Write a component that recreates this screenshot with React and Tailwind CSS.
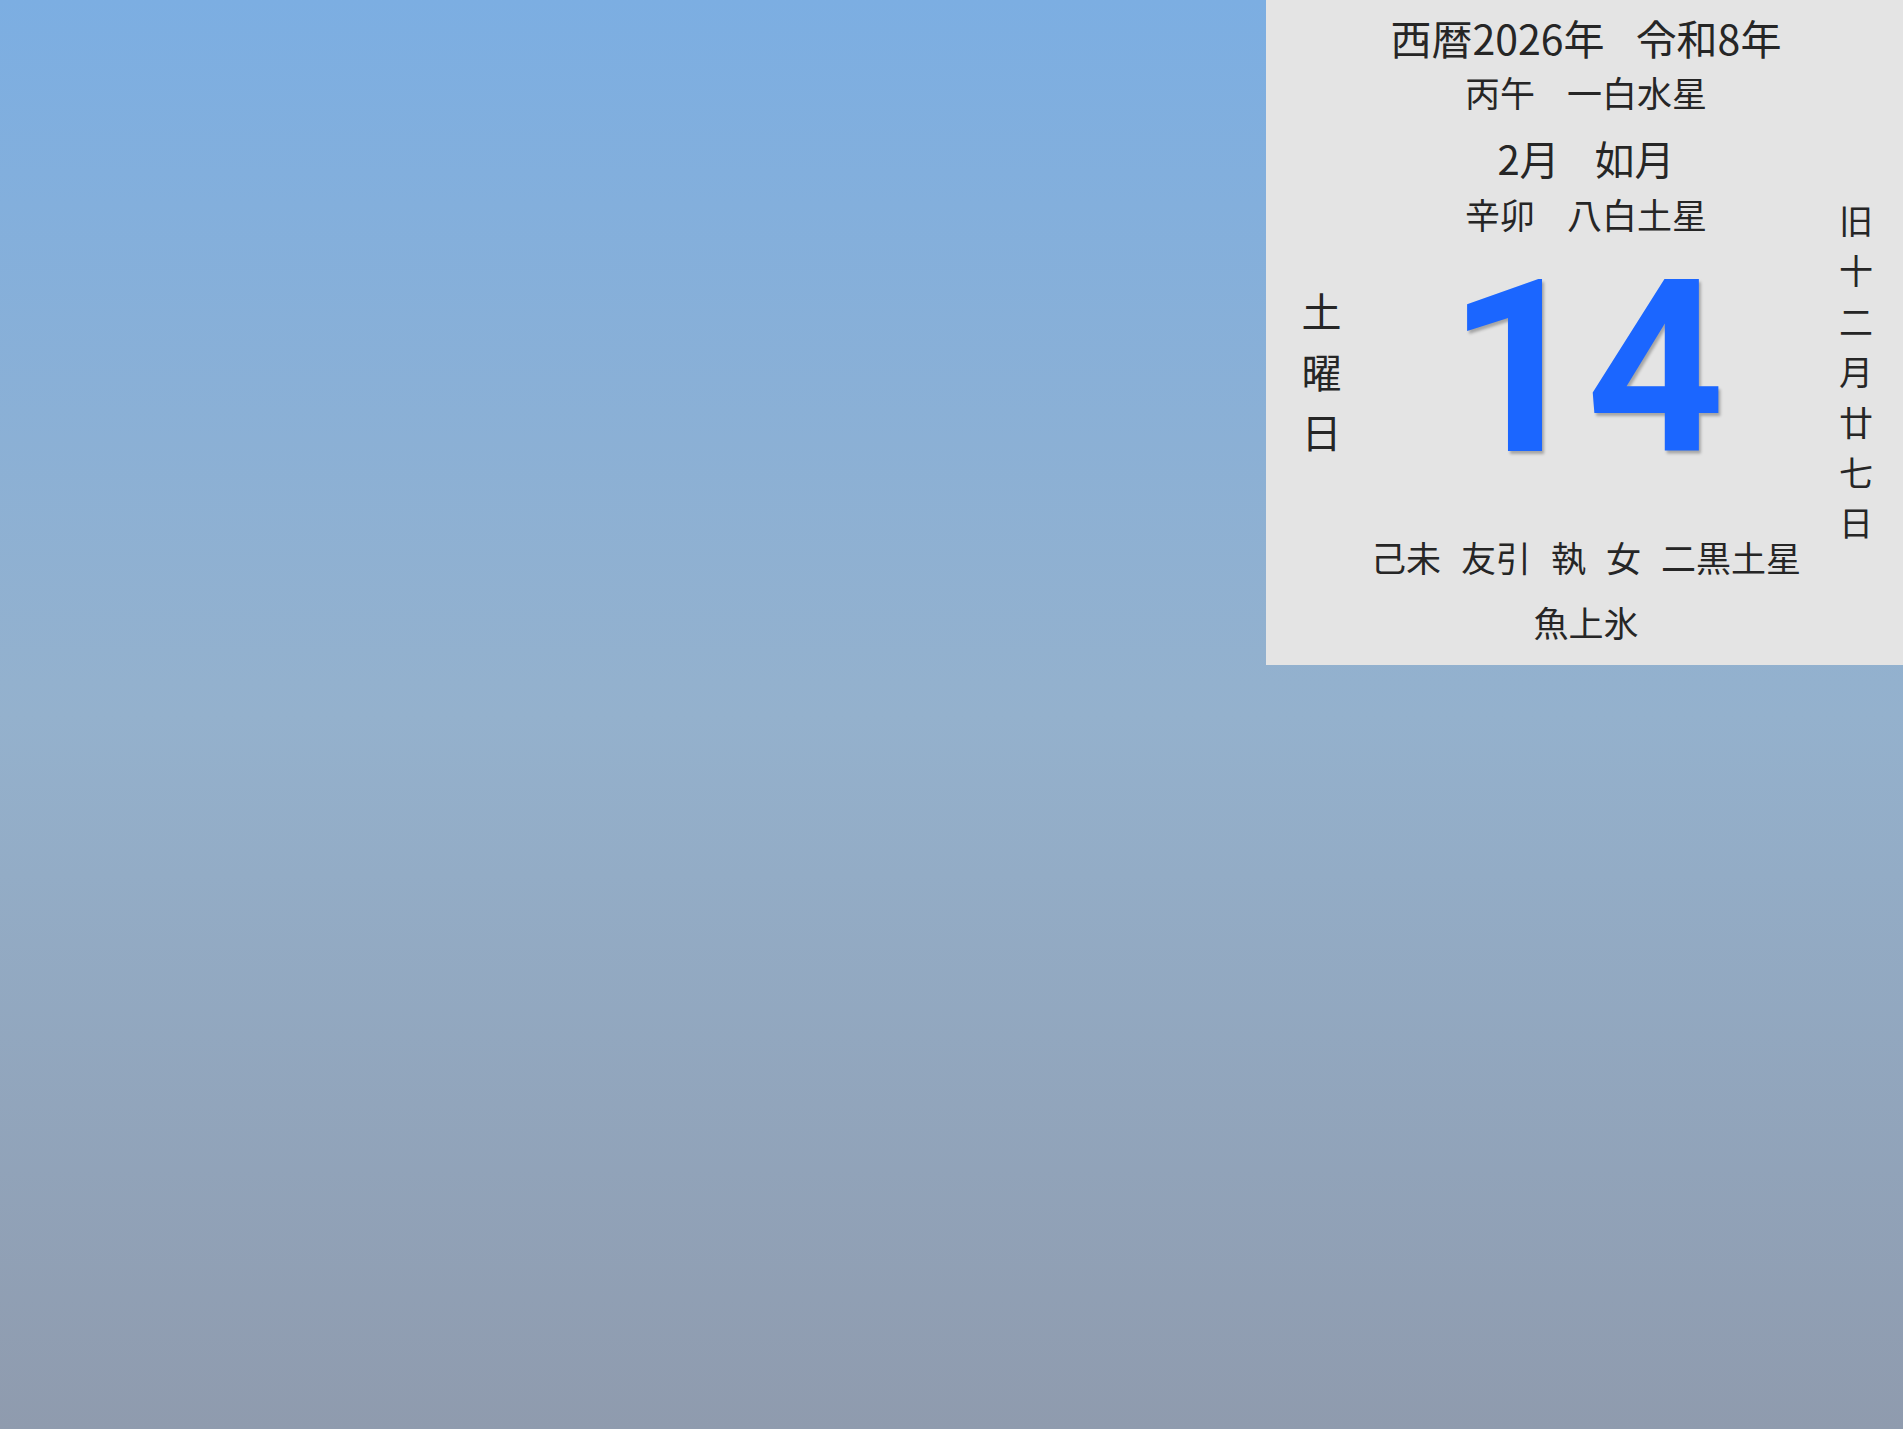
const jp = { fontFamily: '"Noto Sans CJK JP", "Noto Sans", sans-serif' };

function Vertical({ chars, className }) {
  return (
    <div className={className}>
      {chars.split("").map((c, i) => (
        <div key={i}>{c}</div>
      ))}
    </div>
  );
}

export default function App() {
  return (
    <div className="w-[1903px] h-[1429px] flex justify-end items-start bg-linear-to-b from-[#7caee2] via-[#94b1cd] to-[#8f9bae]">
      <div
        className="w-[637px] h-[665px] shrink-0 bg-[#e4e4e4] flex text-[#262626] whitespace-nowrap"
        style={jp}
      >
        {/* 曜日 */}
        <Vertical
          chars="土曜日"
          className="w-[105px] shrink-0 pl-[6px] flex flex-col items-center pt-[280px] text-[40px] leading-[60.7px]"
        />

        {/* main column */}
        <div className="w-[430px] shrink-0 flex flex-col items-center pt-[13px]">
          <div className="flex gap-[31px] text-[41px] leading-[48px]">
            <span>西暦2026年</span>
            <span>令和8年</span>
          </div>
          <div className="mt-[10px] flex gap-[32px] text-[35px] leading-[42px]">
            <span>丙午</span>
            <span>一白水星</span>
          </div>
          <div className="mt-[21px] flex gap-[35px] text-[40px] leading-[48px]">
            <span>2月</span>
            <span>如月</span>
          </div>
          <div className="mt-[11px] flex gap-[32px] text-[35px] leading-[42px]">
            <span>辛卯</span>
            <span>八白土星</span>
          </div>
          <div
            className="mt-[12px] h-[242px] text-[242px] leading-none font-bold text-[#1b66ff] [text-shadow:2px_3px_3px_rgba(0,0,0,0.28)]"
            style={{ fontFamily: 'Roboto, "Liberation Sans", sans-serif' }}
          >
            14
          </div>
          <div className="mt-[47px] flex gap-[20px] text-[35px] leading-[42px]">
            <span>己未</span>
            <span>友引</span>
            <span>執</span>
            <span>女</span>
            <span>二黒土星</span>
          </div>
          <div className="mt-[23px] text-[35px] leading-[42px]">魚上氷</div>
        </div>

        {/* 旧暦 */}
        <Vertical
          chars="旧十二月廿七日"
          className="w-[102px] shrink-0 pl-[8px] flex flex-col items-center pt-[195px] text-[34px] leading-[50.4px]"
        />
      </div>
    </div>
  );
}
